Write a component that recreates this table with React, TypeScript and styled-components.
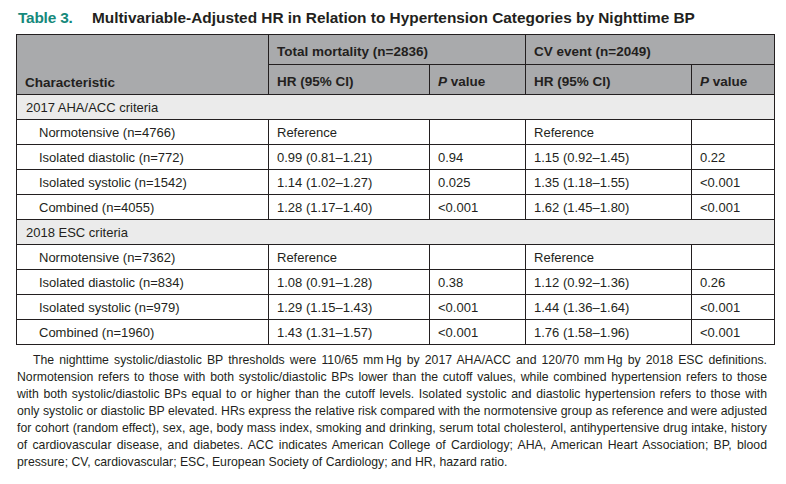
import React from 'react';
import styled, { createGlobalStyle } from 'styled-components';

const GlobalStyle = createGlobalStyle`
  body {
    margin: 0;
    background: #ffffff;
    font-family: 'Liberation Sans', Arial, Helvetica, sans-serif;
    color: #231f20;
  }
`;

const Page = styled.div`
  width: 786px;
  height: 484px;
  box-sizing: border-box;
  padding: 10px 12px 0 16px;
  overflow: hidden;
`;

const TitleBar = styled.div`
  display: flex;
  align-items: baseline;
  padding-left: 2px;
  margin-bottom: 8px;
  font-size: 15.4px;
  line-height: 16px;
  font-weight: bold;
`;

const Label = styled.span`
  width: 74px;
  color: #16897b;
  letter-spacing: -0.2px;
`;

const Heading = styled.span`
  color: #231f20;
`;

const Table = styled.table`
  width: 758px;
  border-collapse: collapse;
  table-layout: fixed;
  font-size: 13px;
  border: 1.5px solid #231f20;
`;

const HeadCell = styled.th<{ $bottom?: boolean }>`
  height: 26px;
  padding: 3px 8px 0 8px;
  background: #a9aaac;
  border: 1px solid #231f20;
  text-align: left;
  font-size: 13.5px;
  font-weight: bold;
  vertical-align: ${(p) => (p.$bottom ? 'bottom' : 'middle')};
  padding-bottom: ${(p) => (p.$bottom ? '4px' : '0')};
`;

const SectionCell = styled.td`
  height: 24px;
  padding: 0 9px;
  background: #ebebeb;
  border: 1px solid #231f20;
`;

const Cell = styled.td<{ $indent?: boolean }>`
  height: 24px;
  padding: 0 ${(p) => (p.$indent ? '22px' : '8px')};
  border: 1px solid #231f20;
  white-space: nowrap;
`;

const Footnote = styled.div`
  margin-top: 7px;
  padding: 0 7px 0 1px;
  font-size: 12.25px;
  line-height: 17px;
  color: #231f20;
`;

const Line = styled.div<{ $first?: boolean; $last?: boolean }>`
  white-space: nowrap;
  text-align: ${(p) => (p.$last ? 'left' : 'justify')};
  text-align-last: ${(p) => (p.$last ? 'left' : 'justify')};
  text-indent: ${(p) => (p.$first ? '16px' : '0')};
`;

type Row = [string, string, string, string, string];

const sections: { title: string; rows: Row[] }[] = [
  {
    title: '2017 AHA/ACC criteria',
    rows: [
      ['Normotensive (n=4766)', 'Reference', '', 'Reference', ''],
      ['Isolated diastolic (n=772)', '0.99 (0.81\u20131.21)', '0.94', '1.15 (0.92\u20131.45)', '0.22'],
      ['Isolated systolic (n=1542)', '1.14 (1.02\u20131.27)', '0.025', '1.35 (1.18\u20131.55)', '<0.001'],
      ['Combined (n=4055)', '1.28 (1.17\u20131.40)', '<0.001', '1.62 (1.45\u20131.80)', '<0.001'],
    ],
  },
  {
    title: '2018 ESC criteria',
    rows: [
      ['Normotensive (n=7362)', 'Reference', '', 'Reference', ''],
      ['Isolated diastolic (n=834)', '1.08 (0.91\u20131.28)', '0.38', '1.12 (0.92\u20131.36)', '0.26'],
      ['Isolated systolic (n=979)', '1.29 (1.15\u20131.43)', '<0.001', '1.44 (1.36\u20131.64)', '<0.001'],
      ['Combined (n=1960)', '1.43 (1.31\u20131.57)', '<0.001', '1.76 (1.58\u20131.96)', '<0.001'],
    ],
  },
];

const notes = [
  'The nighttime systolic/diastolic BP thresholds were 110/65 mm\u2009Hg by 2017 AHA/ACC and 120/70 mm\u2009Hg by 2018 ESC definitions.',
  'Normotension refers to those with both systolic/diastolic BPs lower than the cutoff values, while combined hypertension refers to those',
  'with both systolic/diastolic BPs equal to or higher than the cutoff levels. Isolated systolic and diastolic hypertension refers to those with',
  'only systolic or diastolic BP elevated. HRs express the relative risk compared with the normotensive group as reference and were adjusted',
  'for cohort (random effect), sex, age, body mass index, smoking and drinking, serum total cholesterol, antihypertensive drug intake, history',
  'of cardiovascular disease, and diabetes. ACC indicates American College of Cardiology; AHA, American Heart Association; BP, blood',
  'pressure; CV, cardiovascular; ESC, European Society of Cardiology; and HR, hazard ratio.',
];

const PValue: React.FC = () => (
  <>
    <i>P</i> value
  </>
);

const App: React.FC = () => {
  return (
    <Page>
      <GlobalStyle />
      <TitleBar>
        <Label>Table 3.</Label>
        <Heading>Multivariable-Adjusted HR in Relation to Hypertension Categories by Nighttime BP</Heading>
      </TitleBar>
      <Table>
        <colgroup>
          <col style={{ width: 252 }} />
          <col style={{ width: 161 }} />
          <col style={{ width: 96 }} />
          <col style={{ width: 166 }} />
          <col style={{ width: 83 }} />
        </colgroup>
        <thead>
          <tr>
            <HeadCell rowSpan={2} $bottom>
              Characteristic
            </HeadCell>
            <HeadCell colSpan={2}>Total mortality (n=2836)</HeadCell>
            <HeadCell colSpan={2}>CV event (n=2049)</HeadCell>
          </tr>
          <tr>
            <HeadCell>HR (95% CI)</HeadCell>
            <HeadCell>
              <PValue />
            </HeadCell>
            <HeadCell>HR (95% CI)</HeadCell>
            <HeadCell>
              <PValue />
            </HeadCell>
          </tr>
        </thead>
        <tbody>
          {sections.map((section) => (
            <React.Fragment key={section.title}>
              <tr>
                <SectionCell colSpan={5}>{section.title}</SectionCell>
              </tr>
              {section.rows.map((row) => (
                <tr key={row[0]}>
                  {row.map((value, i) => (
                    <Cell key={i} $indent={i === 0}>
                      {value}
                    </Cell>
                  ))}
                </tr>
              ))}
            </React.Fragment>
          ))}
        </tbody>
      </Table>
      <Footnote>
        {notes.map((text, i) => (
          <Line key={i} $first={i === 0} $last={i === notes.length - 1}>
            {text}
          </Line>
        ))}
      </Footnote>
    </Page>
  );
};

export default App;
